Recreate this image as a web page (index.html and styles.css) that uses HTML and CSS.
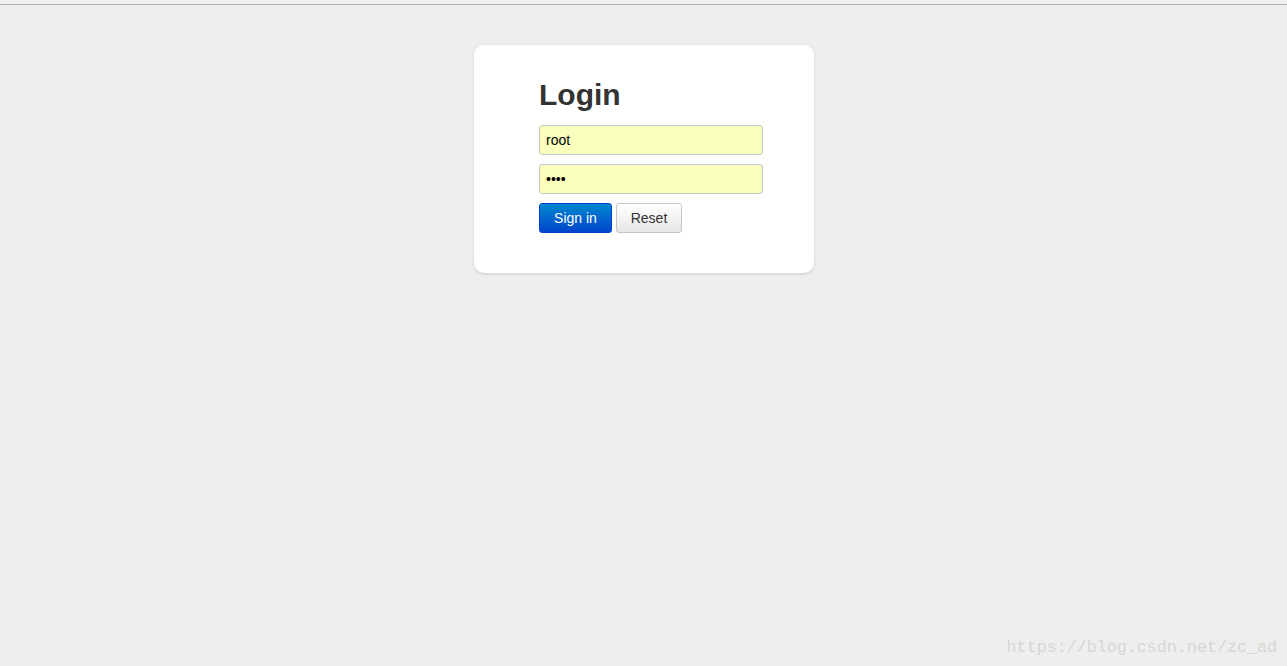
FILE: index.html
```html
<!DOCTYPE html>
<html lang="en">
<head>
    <meta charset="UTF-8">
    <title>Login</title>
    <link rel="stylesheet" href="styles.css">
</head>
<body>
    <div class="topline"></div>
    <div class="page">
        <form class="login-box">
            <h2>Login</h2>
            <input type="text" class="field" value="root">
            <input type="password" class="field" value="root">
            <div class="actions">
                <button type="button" class="btn btn-primary">Sign in</button>
                <button type="reset" class="btn btn-reset">Reset</button>
            </div>
        </form>
    </div>
    <div class="watermark">https://blog.csdn.net/zc_ad</div>
</body>
</html>
```

FILE: styles.css
```css
/* General Styles */
html, body {
    height: 100%;
}

body {
    margin: 0;
    background-color: #eeeeee;
    font-family: 'Liberation Sans', Arial, sans-serif;
    font-size: 14px;
    color: #333;
    position: relative;
    overflow: hidden;
}

.topline {
    height: 4px;
    border-bottom: 1px solid #b0b0b0;
    background-color: #f0f0f0;
}

.page {
    display: flex;
    justify-content: center;
    padding-top: 40px;
}

.login-box {
    width: 340px;
    height: 228px;
    box-sizing: border-box;
    margin-left: 1px;
    padding: 30px 51px 0 65px;
    background-color: #fff;
    border-radius: 10px;
    box-shadow: 0 1px 3px rgba(0, 0, 0, 0.15);
}

h2 {
    margin: 0 0 10px;
    font-size: 30px;
    line-height: 40px;
    font-weight: bold;
    color: #333;
}

.field {
    display: block;
    width: 224px;
    height: 30px;
    box-sizing: border-box;
    margin: 0 0 9px;
    padding: 4px 6px;
    font-family: inherit;
    font-size: 14px;
    color: #000;
    background-color: #faffbd;
    border: 1px solid #c8c8c8;
    border-radius: 3px;
}

.actions {
    display: flex;
    gap: 4px;
}

.btn {
    height: 30px;
    padding: 0;
    font-family: inherit;
    font-size: 14px;
    color: #333;
    background: linear-gradient(#ffffff, #e6e6e6);
    border: 1px solid #c6c6c6;
    border-radius: 3px;
}

.btn-primary {
    width: 73px;
    color: #fff;
    background: linear-gradient(#0088cc, #0044cc);
    border-color: #0044cc;
}

.btn-reset {
    width: 66px;
}

.watermark {
    position: absolute;
    right: 10px;
    bottom: 9px;
    font-family: 'Liberation Mono', 'DejaVu Sans Mono', monospace;
    font-size: 16.7px;
    color: #d8d6d1;
}
```
